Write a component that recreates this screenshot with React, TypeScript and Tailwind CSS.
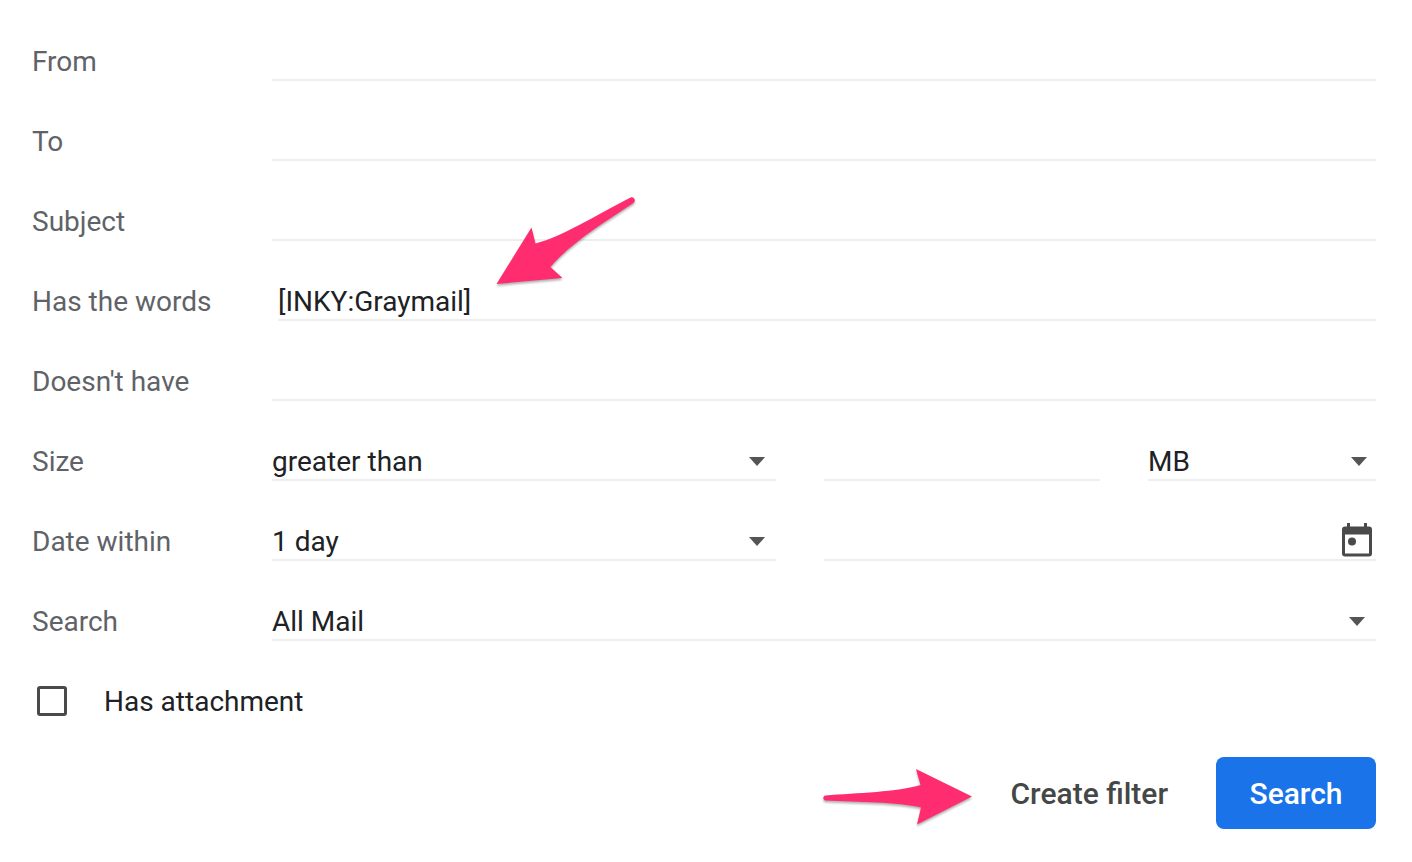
import { useId, type ReactNode } from "react";

const LINE = "border-b-2 border-[#eeeeee]";
const CONTROL =
  "block h-10 w-full rounded-none bg-transparent text-[28px] text-[#202124] outline-none";

function Row({ label, htmlFor, children }: { label: string; htmlFor: string; children: ReactNode }) {
  return (
    <div className="flex items-center">
      <label htmlFor={htmlFor} className="w-60 shrink-0 pt-0.5 text-[28px] leading-[38px] text-[#5f6368]">
        {label}
      </label>
      <div className="min-w-0 flex-1">{children}</div>
    </div>
  );
}

function TextField({ id, value, label }: { id?: string; value?: string; label?: string }) {
  return (
    <input
      id={id}
      type="text"
      aria-label={label}
      defaultValue={value}
      className={`${CONTROL} ${LINE} pt-0.5 leading-9`}
    />
  );
}

function SelectField({ id, label, options, near }: { id?: string; label?: string; options: string[]; near?: boolean }) {
  return (
    <div className="relative">
      <select id={id} aria-label={label} className={`${CONTROL} ${LINE} appearance-none pt-1 leading-[34px]`}>
        {options.map((o) => (
          <option key={o}>{o}</option>
        ))}
      </select>
      <svg
        viewBox="0 0 16 9"
        className={`pointer-events-none absolute top-4 h-[9px] w-4 ${near ? "right-[9px]" : "right-[11px]"}`}
        aria-hidden="true"
      >
        <path d="M0 0h16L8 9z" fill="#555555" />
      </svg>
    </div>
  );
}

function CalendarIcon() {
  return (
    <svg viewBox="0 0 30 34" className="h-[34px] w-[30px]" aria-hidden="true">
      <path
        fillRule="evenodd"
        fill="#4a4a4a"
        d="M5 0h3v3.500h14V0h3v3.500h2a3 3 0 0 1 3 3V30.500a3 3 0 0 1-3 3H3a3 3 0 0 1-3-3V6.500a3 3 0 0 1 3-3h2zM3 11.500V30.500H27V11.500z"
      />
      <circle cx="10" cy="18.500" r="4" fill="#4a4a4a" />
    </svg>
  );
}

export default function App() {
  const id = useId();
  return (
    <form
      onSubmit={(e) => e.preventDefault()}
      className="flex flex-col gap-10 bg-white pt-[41px] pr-9 pb-8 pl-8 font-[Roboto,sans-serif]"
    >
      <Row label="From" htmlFor={`${id}from`}>
        <TextField id={`${id}from`} />
      </Row>
      <Row label="To" htmlFor={`${id}to`}>
        <TextField id={`${id}to`} />
      </Row>
      <Row label="Subject" htmlFor={`${id}subject`}>
        <TextField id={`${id}subject`} />
      </Row>
      <Row label="Has the words" htmlFor={`${id}words`}>
        <div className="relative pl-1.5">
          <TextField id={`${id}words`} value="[INKY:Graymail]" />
          <svg
            viewBox="490 190 152 102"
            className="pointer-events-none absolute bottom-[29px] left-[218px] h-[102px] w-[152px] drop-shadow-[0_2px_1px_rgba(0,0,0,0.3)]"
            aria-hidden="true"
          >
            <path
              fill="#ff2d6f"
              d="M496.500 284L531.500 227.500L535.500 243.500C561 237 595 216 630.500 197.500C634 196 636.500 200.500 633.500 203C603 223 571 243 550.500 267L562.500 278Z"
            />
          </svg>
        </div>
      </Row>
      <Row label="Doesn't have" htmlFor={`${id}without`}>
        <TextField id={`${id}without`} />
      </Row>
      <Row label="Size" htmlFor={`${id}size`}>
        <div className="grid grid-cols-[504fr_276fr_228fr] gap-12">
          <SelectField id={`${id}size`} options={["greater than", "less than"]} />
          <TextField label="Size value" />
          <SelectField label="Size unit" options={["MB", "KB", "Bytes"]} near />
        </div>
      </Row>
      <Row label="Date within" htmlFor={`${id}date`}>
        <div className="grid grid-cols-[504fr_552fr] gap-12">
          <SelectField id={`${id}date`} options={["1 day", "3 days", "1 week"]} />
          <div className={`flex h-10 items-end gap-2 pr-1 pb-0.5 ${LINE}`}>
            <input
              type="text"
              aria-label="Date"
              className="min-w-0 flex-1 bg-transparent text-[28px] leading-8 text-[#202124] outline-none"
            />
            <button type="button" aria-label="Choose date">
              <CalendarIcon />
            </button>
          </div>
        </div>
      </Row>
      <Row label="Search" htmlFor={`${id}scope`}>
        <SelectField id={`${id}scope`} options={["All Mail", "Inbox", "Starred"]} />
      </Row>
      <div className="flex items-center pl-[5px]">
        <input
          id={`${id}attachment`}
          type="checkbox"
          className="size-[30px] appearance-none rounded-[3px] border-3 border-[#4a4a4a] checked:bg-[#4a4a4a]"
        />
        <label htmlFor={`${id}attachment`} className="pt-0.5 pl-[37px] text-[28px] leading-[38px] text-[#202124]">
          Has attachment
        </label>
      </div>
      <div className="-mt-1 flex items-center justify-end">
        <svg
          viewBox="816 757 162 72"
          className="h-[72px] w-[162px] drop-shadow-[0_2px_1px_rgba(0,0,0,0.3)]"
          aria-hidden="true"
        >
          <path
            fill="#ff2d6f"
            d="M825.500 795.500C857 793 898 792 920.500 785L916 769L972 796.500L917 824.500L921 807.500C898 802 857 802 825.500 800.500C822.500 800 822.500 796 825.500 795.500Z"
          />
        </svg>
        <button type="button" className="h-[72px] px-8 text-[30px] font-medium text-[#444746]">
          Create filter
        </button>
        <button
          type="submit"
          className="ml-4 h-[72px] w-40 rounded-lg bg-[#1a73e8] text-[30px] font-medium text-white"
        >
          Search
        </button>
      </div>
    </form>
  );
}
